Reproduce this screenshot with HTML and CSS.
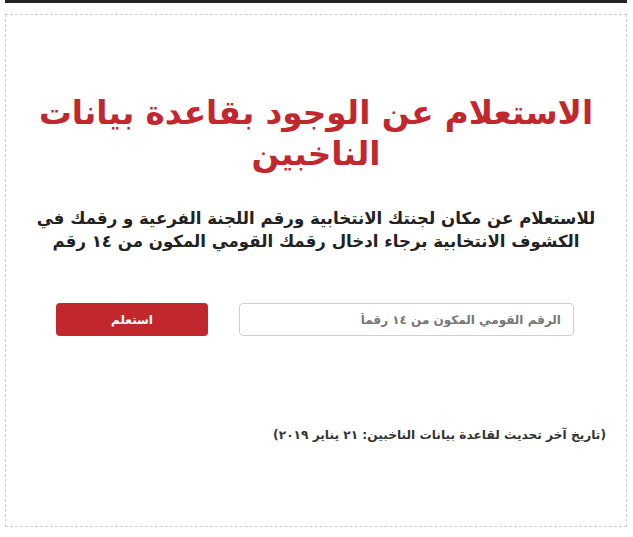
FILE: index.html
```html
<!DOCTYPE html>
<html lang="ar" dir="rtl">
<head>
<meta charset="utf-8">
<title>الاستعلام عن الوجود بقاعدة بيانات الناخبين</title>
<link rel="stylesheet" href="styles.css">
</head>
<body>
<div class="topbar"></div>
<div class="box">
  <h1 class="title">الاستعلام عن الوجود بقاعدة بيانات الناخبين</h1>
  <p class="lead">للاستعلام عن مكان لجنتك الانتخابية ورقم اللجنة الفرعية و رقمك في الكشوف الانتخابية برجاء ادخال رقمك القومي المكون من ١٤ رقم</p>
  <form class="row">
    <input class="field" type="text" placeholder="الرقم القومي المكون من ١٤ رقماً">
    <button class="btn" type="button">استعلم</button>
  </form>
  <p class="note">(تاريخ آخر تحديث لقاعدة بيانات الناخبين: ٢١ يناير ٢٠١٩)</p>
</div>
</body>
</html>
```
FILE: styles.css
```css
html, body {
  margin: 0;
  padding: 0;
  background: #fff;
}
body {
  font-family: "DejaVu Sans", "Noto Sans", sans-serif;
  direction: rtl;
}
.topbar {
  height: 3px;
  margin: 0 6px 0 5px;
  background: #222;
}
.box {
  margin: 11px 6px 0 5px;
  height: 513px;
  border: 1px dashed #cfcfcf;
  box-sizing: border-box;
  padding: 78px 20px 0 20px;
}
.title {
  margin: 0;
  text-align: center;
  color: #c1272d;
  font-size: 32.7px;
  line-height: 41px;
  font-weight: bold;
}
.lead {
  margin: 32px 0 0;
  text-align: center;
  color: #222;
  font-size: 16.6px;
  line-height: 23px;
  font-weight: bold;
}
.row {
  display: flex;
  justify-content: space-between;
  align-items: center;
  margin: 50px 32px 0 30px;
}
.field {
  width: 335px;
  height: 33px;
  box-sizing: border-box;
  border: 1px solid #cfcfcf;
  border-radius: 4px;
  padding: 0 12px;
  font-family: inherit;
  font-size: 12px;
  color: #333;
  direction: rtl;
}
.field::placeholder {
  color: #777;
  font-weight: bold;
}
.btn {
  width: 152px;
  height: 33px;
  border: 0;
  border-radius: 4px;
  background: #c1272d;
  color: #fff;
  font-family: inherit;
  font-size: 12px;
  font-weight: bold;
}
.note {
  margin: 92px 0 0;
  color: #333;
  font-size: 12.2px;
  font-weight: bold;
  text-align: right;
}
```
